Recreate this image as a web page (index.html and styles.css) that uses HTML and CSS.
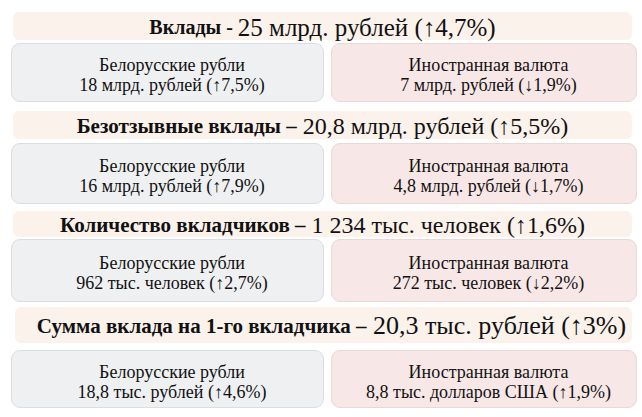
FILE: index.html
```html
<!DOCTYPE html>
<html lang="ru">
<head>
<meta charset="utf-8">
<link rel="stylesheet" href="styles.css">
</head>
<body>
<div class="page">
  <div class="head h1">Вклады - <span class="val">25 млрд. рублей (↑4,7%)</span></div>
  <div class="pair p1">
    <div class="card byn">Белорусские рубли<br>18 млрд. рублей (↑7,5%)</div>
    <div class="card fx">Иностранная валюта<br>7 млрд. рублей (↓1,9%)</div>
  </div>
  <div class="head h2">Безотзывные вклады –<span class="val"> 20,8 млрд. рублей (↑5,5%)</span></div>
  <div class="pair p2">
    <div class="card byn">Белорусские рубли<br>16 млрд. рублей (↑7,9%)</div>
    <div class="card fx">Иностранная валюта<br>4,8 млрд. рублей (↓1,7%)</div>
  </div>
  <div class="head h3">Количество вкладчиков –<span class="val"> 1 234 тыс. человек (↑1,6%)</span></div>
  <div class="pair p3">
    <div class="card byn">Белорусские рубли<br>962 тыс. человек (↑2,7%)</div>
    <div class="card fx">Иностранная валюта<br>272 тыс. человек (↓2,2%)</div>
  </div>
  <div class="head h4">Сумма вклада на 1-го вкладчика –<span class="val"> 20,3 тыс. рублей (↑3%)</span></div>
  <div class="pair p4">
    <div class="card byn">Белорусские рубли<br>18,8 тыс. рублей (↑4,6%)</div>
    <div class="card fx">Иностранная валюта<br>8,8 тыс. долларов США (↑1,9%)</div>
  </div>
</div>
</body>
</html>
```
FILE: styles.css
```css
html, body {
  margin: 0;
  padding: 0;
  background: #ffffff;
}
.page {
  width: 642px;
  height: 417px;
  box-sizing: border-box;
  padding: 12px 5px 0 11px;
  display: flex;
  flex-direction: column;
  font-family: "Liberation Serif", "Times New Roman", serif;
  color: #111111;
}
.head {
  margin: 0 5px 0 2px;
  padding-top: 2px;
  box-sizing: border-box;
  background: #fbf2ec;
  border-radius: 6px;
  font-weight: bold;
  font-size: 21px;
  line-height: 1;
  display: flex;
  align-items: center;
  justify-content: center;
  white-space: pre;
}
.head .val {
  font-weight: normal;
  font-size: 24px;
}
.pair {
  display: grid;
  grid-template-columns: 313px 306px;
  gap: 7px;
}
.card {
  border-radius: 9px;
  font-size: 18px;
  line-height: 20px;
  padding: 5px 0 0 9px;
  display: flex;
  align-items: center;
  justify-content: center;
  text-align: center;
  box-sizing: border-box;
}
.byn {
  background: #eff0f2;
  border: 1px solid #dcdde0;
}
.fx {
  background: #f8e7e7;
  border: 1px solid #ead8d8;
}
.h1 { height: 28px; font-size: 20px; }
.h1 .val { font-size: 25px; }
.p1 { height: 59px; margin-top: 3px; }
.h2 { height: 28px; margin-top: 9px; }
.p2 { height: 61px; margin-top: 4px; }
.h3 { height: 26px; margin-top: 7px; }
.h3 .val { font-size: 24px; }
.p3 { height: 63px; margin-top: 2px; }
.h4 { height: 36px; margin-top: 5px; margin-left: 4px; padding-left: 16px; font-size: 21px; }
.h4 .val { font-size: 26px; }
.p4 { height: 58px; margin-top: 7px; }
```
